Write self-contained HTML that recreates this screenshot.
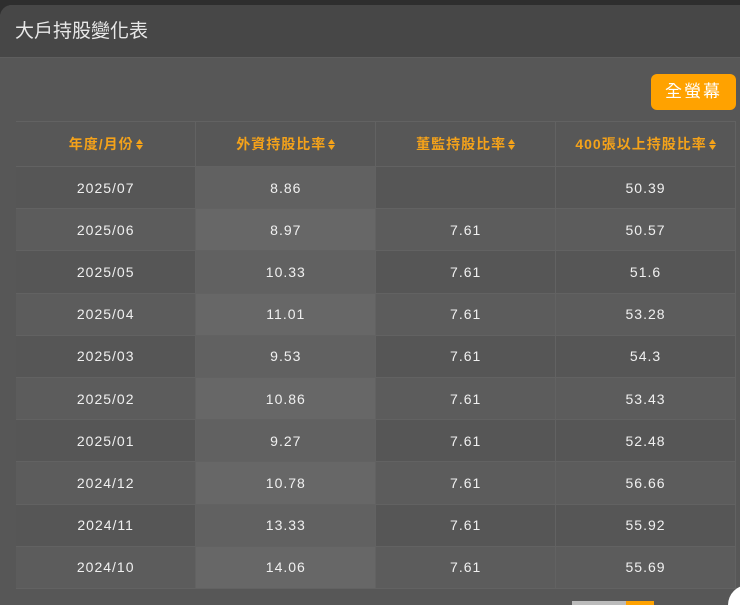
<!DOCTYPE html>
<html><head><meta charset="utf-8"><style>
*{margin:0;padding:0;box-sizing:border-box}
html,body{width:740px;height:605px;overflow:hidden}
body{background:#2e2e2e;font-family:"Liberation Sans","Noto Sans CJK TC",sans-serif;position:relative}
.panel{position:absolute;left:0;top:5px;width:740px;height:600px;background:#575757;border-top-left-radius:12px;overflow:hidden}
.hd{height:53px;background:#474747;border-bottom:1px solid #5e5e5e;color:#e8e8e8;font-size:19px;line-height:53px;padding-left:15px}
.btn{position:absolute;left:651px;top:69px;width:85px;height:36px;background:#ffa200;border-radius:6px;color:#fff;font-size:17px;text-align:center;line-height:36px;letter-spacing:2px}
table{position:absolute;left:16px;top:116px;border-collapse:collapse;width:720px}
td,th{border:1px solid #626262;text-align:center;width:180px;height:42.2px;font-size:14px;color:#f0f0f0;letter-spacing:1px}
th{height:45px;color:#f4a21a;font-weight:bold;background:#575757;font-size:14px}
th svg{vertical-align:-1px;margin-left:2px}
tr:nth-child(even) td{background:#565656}
tr:nth-child(odd) td{background:#5c5c5c}
tr:nth-child(even) td:nth-child(2){background:#616161}
tr:nth-child(odd) td:nth-child(2){background:#676767}
td:first-child,th:first-child{border-left:none}
.sb{position:absolute;left:572px;top:601px;width:82px;height:4px;background:#bbb}
.sb i{position:absolute;left:54px;top:0;width:28px;height:4px;background:#ffa200}
.circ{position:absolute;left:728px;top:585px;width:40px;height:40px;border-radius:50%;background:#fff}
</style></head><body>
<div class="panel">
<div class="hd">大戶持股變化表</div>
<div class="btn">全螢幕</div>
<table>
<tr><th>年度/月份<svg width="7" height="11"><path d="M0 5L3.5 0L7 5ZM0 6L3.5 11L7 6Z" fill="#f4a21a"/></svg></th><th>外資持股比率<svg width="7" height="11"><path d="M0 5L3.5 0L7 5ZM0 6L3.5 11L7 6Z" fill="#f4a21a"/></svg></th><th>董監持股比率<svg width="7" height="11"><path d="M0 5L3.5 0L7 5ZM0 6L3.5 11L7 6Z" fill="#f4a21a"/></svg></th><th>400張以上持股比率<svg width="7" height="11"><path d="M0 5L3.5 0L7 5ZM0 6L3.5 11L7 6Z" fill="#f4a21a"/></svg></th></tr>
<tr><td>2025/07</td><td>8.86</td><td></td><td>50.39</td></tr>
<tr><td>2025/06</td><td>8.97</td><td>7.61</td><td>50.57</td></tr>
<tr><td>2025/05</td><td>10.33</td><td>7.61</td><td>51.6</td></tr>
<tr><td>2025/04</td><td>11.01</td><td>7.61</td><td>53.28</td></tr>
<tr><td>2025/03</td><td>9.53</td><td>7.61</td><td>54.3</td></tr>
<tr><td>2025/02</td><td>10.86</td><td>7.61</td><td>53.43</td></tr>
<tr><td>2025/01</td><td>9.27</td><td>7.61</td><td>52.48</td></tr>
<tr><td>2024/12</td><td>10.78</td><td>7.61</td><td>56.66</td></tr>
<tr><td>2024/11</td><td>13.33</td><td>7.61</td><td>55.92</td></tr>
<tr><td>2024/10</td><td>14.06</td><td>7.61</td><td>55.69</td></tr>
</table>
</div>
<div class="sb"><i></i></div>
<div class="circ"></div>
</body></html>
